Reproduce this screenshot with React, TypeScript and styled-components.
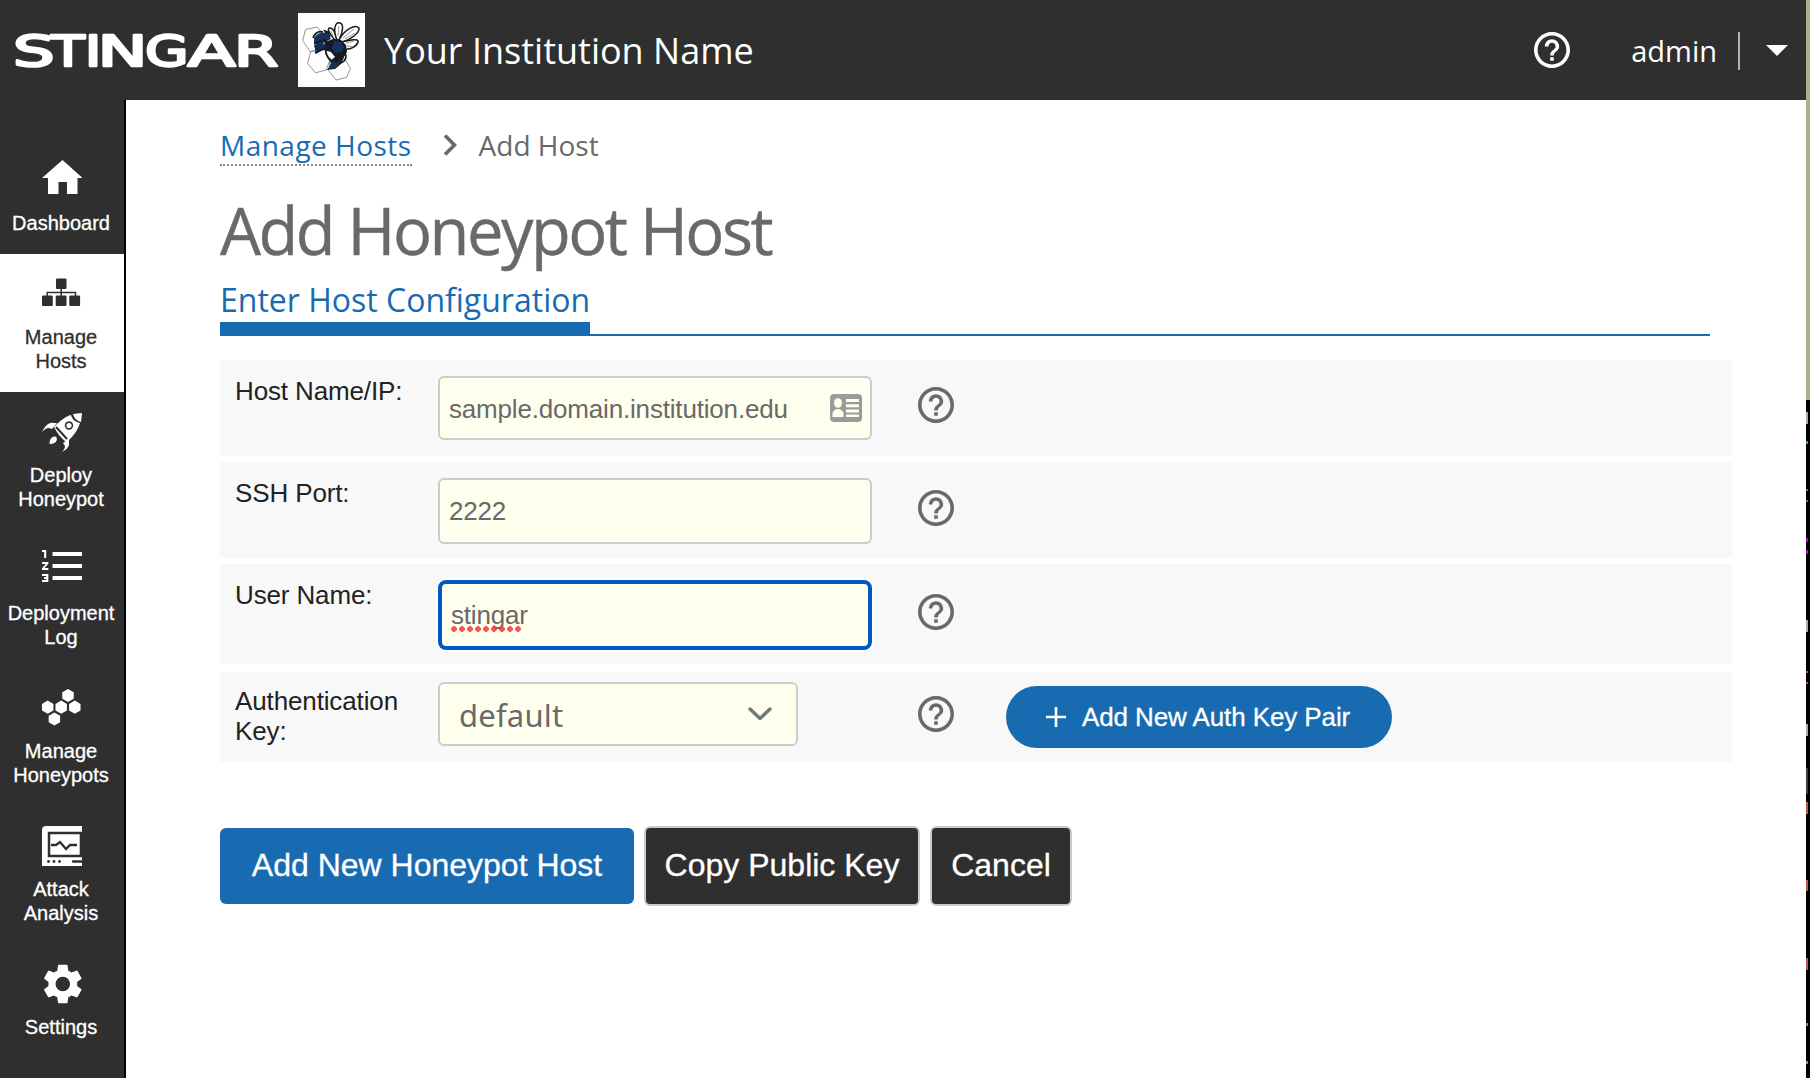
import React from 'react';
import styled, { createGlobalStyle } from 'styled-components';

const SANS = '"Liberation Sans", Arial, sans-serif';
const OPEN = '"Open Sans", "Noto Sans", sans-serif';
const BLUE = '#186bb1';
const DARK = '#2f2f2f';

const Global = createGlobalStyle`
  * { box-sizing: border-box; }
  body { margin: 0; background: #fff; font-family: ${SANS}; overflow: hidden; }
  button, input { font-family: inherit; margin: 0; }
`;

const Screen = styled.div`
  display: flex;
  width: 1810px;
  height: 1078px;
  overflow: hidden;
`;
const Shell = styled.div`
  width: 1806px;
  display: flex;
  flex-direction: column;
  background: #fff;
`;
const EdgeStrip = styled.div`
  width: 4px;
  background:
    linear-gradient(transparent 400px, #000 400px) right / 2px 100% no-repeat,
    linear-gradient(
      #b3ab93 0 400px, #000 400px 412px, #aaa 412px 424px, #000 424px 441px, #12aab4 441px 444px,
      #000 444px 489px, #a55 489px 491px, #000 491px 500px, #a55 500px 502px, #000 502px 538px,
      #b400b4 538px 542px, #000 542px 550px, #b400b4 550px 554px, #000 554px 620px, #aaa 620px 632px,
      #000 632px 671px, #a55 671px 673px, #000 673px 682px, #a55 682px 684px, #000 684px 724px,
      #aaa 724px 736px, #000 736px 768px, #3c3c3c 768px 794px, #000 794px 802px, #b05a5a 802px 814px,
      #000 814px 880px, #b05a5a 880px 891px, #000 891px 958px, #b05a5a 958px 970px, #000 970px 1023px,
      #c66 1023px 1026px, #000 1026px 1061px, #888 1061px 1064px, #000 1064px
    );
`;

const Header = styled.header`
  height: 100px;
  flex: none;
  background: ${DARK};
  color: #fff;
  display: flex;
  align-items: center;
  padding: 0 18px 0 16px;
`;
const Wordmark = styled.svg`
  width: 264px;
  height: 40px;
  margin-right: 18px;
  overflow: visible;
`;
const Emblem = styled.svg`
  width: 67px;
  height: 74px;
  background: #fff;
  margin-right: 19px;
`;
const Institution = styled.span`
  padding-top: 2px;
  font: 400 36px/50px ${OPEN};
  flex: 1;
  white-space: nowrap;
`;
const UserName = styled.span`
  padding-top: 2px;
  font: 400 29px/40px ${OPEN};
  margin-left: 61px;
  margin-right: 21px;
`;
const Divider = styled.span`
  width: 2px;
  height: 38px;
  margin-top: 2px;
  background: #b4b4b4;
  margin-right: 26px;
`;

const Body = styled.div`
  flex: 1;
  display: flex;
  min-height: 0;
`;
const Sidebar = styled.nav`
  width: 126px;
  flex: none;
  background: ${DARK};
  border-right: 2px solid #000;
  padding-top: 40px;
`;
const NavItem = styled.a<{ $active?: boolean }>`
  display: flex;
  flex-direction: column;
  align-items: center;
  padding: 20px 0 19px;
  background: ${(p) => (p.$active ? '#fff' : DARK)};
  color: ${(p) => (p.$active ? DARK : '#fff')};
`;
const NavIcon = styled.svg`
  width: 40px;
  height: 40px;
  display: block;
  margin-bottom: 11px;
  overflow: hidden;
`;
const NavLabel = styled.span`
  width: 122px;
  padding-right: 2px;
  font-size: 20px;
  line-height: 24px;
  -webkit-text-stroke: 0.3px currentColor;
  text-align: center;
  white-space: pre-line;
`;

const Main = styled.main`
  flex: 1;
  padding: 26px 0 0 94px;
`;
const Crumbs = styled.div`
  display: flex;
  height: 40px;
  font: 400 28px/38px ${OPEN};
  color: #696969;
`;
const CrumbLink = styled.a`
  color: ${BLUE};
  height: 40px;
  letter-spacing: 0.48px;
  border-bottom: 2px dotted #888;
`;
const CrumbChevron = styled.svg`
  width: 14px;
  height: 22px;
  margin: 8px 22px 0 31px;
`;
const Title = styled.h1`
  margin: 20px 0 0;
  font: 400 65px/88px ${OPEN};
  letter-spacing: -2.5px;
  color: #696969;
  -webkit-text-stroke: 0.4px currentColor;
`;
const SectionBar = styled.div`
  margin-top: 1px;
  width: 1490px;
  height: 61px;
  display: flex;
  border-bottom: 2px solid ${BLUE};
`;
const SectionTab = styled.h2`
  margin: 0 0 -2px;
  height: 61px;
  padding-top: 3px;
  border-bottom: 14px solid ${BLUE};
  font: 400 32px/44px ${OPEN};
  color: ${BLUE};
  white-space: nowrap;
`;

const Form = styled.div`
  margin-top: 24px;
  width: 1512px;
`;
const Row = styled.div<{ $h: number; $top: number; $gap?: number }>`
  display: flex;
  align-items: flex-start;
  height: ${(p) => p.$h}px;
  padding: ${(p) => p.$top}px 0 0 15px;
  margin-bottom: ${(p) => p.$gap ?? 0}px;
  background: #f8f8f8;
`;
const Label = styled.label<{ $top: number }>`
  width: 203px;
  padding-top: ${(p) => p.$top}px;
  font-size: 26px;
  line-height: 30px;
  letter-spacing: -0.13px;
  color: #222;
`;
const FieldCell = styled.div`
  width: 478px;
`;
const Field = styled.div<{ $h: number; $w?: number; $focus?: boolean }>`
  width: ${(p) => p.$w ?? 434}px;
  height: ${(p) => p.$h}px;
  display: flex;
  align-items: center;
  justify-content: space-between;
  border: ${(p) => (p.$focus ? '4px solid #0058c4' : '2px solid #ccc')};
  border-radius: ${(p) => (p.$focus ? 8 : 6)}px;
  padding: 0 8px 0 9px;
  background: #ffffee;
  color: #696969;
  font-size: 26px;
  line-height: 32px;
  letter-spacing: -0.18px;
  box-shadow: ${(p) => (p.$focus ? '0 0 0 2px #fff' : 'none')};
`;
const HostValue = styled.span`
  padding-top: 2px;
`;
const Misspelled = styled.span`
  position: relative;
  &::after {
    content: '';
    position: absolute;
    left: 0;
    bottom: -1px;
    width: 72px;
    height: 6px;
    background: radial-gradient(circle 3px at 3px 3px, rgba(255, 50, 60, 0.85) 90%, transparent) 0 0 / 8px 6px repeat-x;
  }
`;
const SelectValue = styled.span`
  padding: 1px 0 0 10px;
  font: 400 31px/40px "Noto Sans", sans-serif;
  letter-spacing: 0.2px;
`;
const SelectChevron = styled.svg`
  width: 24px;
  height: 14px;
  margin-right: 16px;
`;
const HelpBox = styled.span<{ $top?: number }>`
  width: 40px;
  display: flex;
  justify-content: center;
  color: #696969;
  padding-top: ${(p) => p.$top ?? 0}px;
`;
const PillButton = styled.button`
  width: 386px;
  height: 62px;
  margin: 4px 0 0 50px;
  display: flex;
  align-items: center;
  padding: 0 0 0 40px;
  gap: 16px;
  border: 0;
  border-radius: 31px;
  background: ${BLUE};
  color: #fff;
  font-size: 26px;
  letter-spacing: -0.1px;
  -webkit-text-stroke: 0.3px currentColor;
  white-space: nowrap;
`;

const Actions = styled.div`
  margin-top: 64px;
  display: flex;
  align-items: center;
  gap: 10px;
`;
const ActionButton = styled.button<{ $primary?: boolean; $w: number }>`
  width: ${(p) => p.$w}px;
  height: ${(p) => (p.$primary ? 76 : 80)}px;
  padding: 0 0 2px;
  border: ${(p) => (p.$primary ? '0' : '2px solid #ccc')};
  border-radius: 6px;
  background: ${(p) => (p.$primary ? BLUE : DARK)};
  color: #fff;
  font-size: 32px;
  -webkit-text-stroke: 0.3px currentColor;
  white-space: nowrap;
`;

const HelpIcon = () => (
  <svg width="36" height="36" viewBox="2 2 20 20" fill="currentColor">
    <path d="M11 18h2v-2h-2v2zm1-16C6.48 2 2 6.48 2 12s4.48 10 10 10 10-4.48 10-10S17.52 2 12 2zm0 18c-4.41 0-8-3.59-8-8s3.59-8 8-8 8 3.590 8 8-3.590 8-8 8zm0-14c-2.210 0-4 1.790-4 4h2c0-1.100.9-2 2-2s2 .9 2 2c0 2-3 1.750-3 5h2c0-2.250 3-2.500 3-5 0-2.210-1.790-4-4-4z" />
  </svg>
);

// letter, ink start, ink width, then the face's left bearing, ink width and advance in em
const wordmark: [string, number, number, number, number, number][] = [
  ['S', 0, 36, 0.066, 0.513, 0.635],
  ['T', 34, 36, 0, 0.614, 0.611],
  ['I', 73, 8, 0.098, 0.099, 0.295],
  ['N', 87, 39, 0.098, 0.552, 0.748],
  ['G', 131, 39, 0.056, 0.652, 0.775],
  ['A', 171, 49, 0.008, 0.668, 0.684],
  ['R', 223, 40, 0.098, 0.588, 0.695],
];
const MARK_SIZE = 43;
const MARK_STROKE = 2.4;

const Logo = () => (
  <Wordmark viewBox="0 0 264 40">
    <text fontFamily="'DejaVu Sans', sans-serif" fontSize={MARK_SIZE} fill="#fff" stroke="#fff" strokeWidth={MARK_STROKE} strokeLinejoin="round">
      {wordmark.map(([ch, x, w, bearing, ink, advance]) => {
        const k = (w - MARK_STROKE) / (ink * MARK_SIZE);
        return (
          <tspan
            key={ch}
            x={x + MARK_STROKE / 2 - bearing * MARK_SIZE * k}
            y="35.700"
            textLength={advance * MARK_SIZE * k}
            lengthAdjust="spacingAndGlyphs"
          >
            {ch}
          </tspan>
        );
      })}
    </text>
  </Wordmark>
);

const hexagon = (cx: number, cy: number, r: number) =>
  [0, 1, 2, 3, 4, 5]
    .map((i) => {
      const a = (Math.PI / 3) * i + Math.PI / 2;
      return `${(cx + r * Math.cos(a)).toFixed(2)},${(cy + r * Math.sin(a)).toFixed(2)}`;
    })
    .join(' ');

const Bee = () => (
  <Emblem viewBox="0 0 67 74">
    <g fill="none" stroke="#8a8a8a" strokeWidth="0.9">
      <path d="M7.500 16.500L19.300 14 27 24 23 36 12 38.600 4.700 27.500z" />
      <path d="M12.700 38.600L27 36.500 32 47 28 57 17.500 59.800 9.500 50.500z" />
      <path d="M32 47L46.500 45.500 52.500 55.500 48.500 64.500 38 67 30.500 57.500z" />
    </g>
    <g fill="#fff" stroke="#181a1e" strokeWidth="1.500">
      <path d="M37 27C30 19 29 15 32 15s6 5 7 12z" />
      <path d="M39 27C34 15 38 9 42 10s3 9-1 17z" />
      <path d="M41 27C47 16 57 11 61 15c1 4-8 12-17 14z" />
      <path d="M44 29c8-2 17-4 16 0s-7 8-14 7z" />
    </g>
    <path d="M40 23l1-10M45 25l11-9M48 30l8-2M35 23l-2-5M49 33l6 1M47 26l10-6" stroke="#555" strokeWidth="0.600" />
    <path d="M27 29l8-3 8 1 5 5 1 7-3 5-3 7-6 5-9 1 6-4-2-5 5-4-4-5-8-2z" fill="#171a20" />
    <path d="M36 28l7 1 3 5-2 5-7 1-3-5z" fill="#16325f" />
    <path d="M16 25c3-5 9-7 14-4l3 5-6 3-4 4-7-2z" fill="#16325f" />
    <path d="M16 32l11-1 3 3-12 7z" fill="#102d58" />
    <path d="M15 25c2-5 6-7 10-6M29 21l-2-3 3 1 2 5M16 31l9-4 4 2M17 40l12-6" fill="none" stroke="#171a20" strokeWidth="1.700" />
    <path d="M32 47l-3-2 4 5-3 6 7-1 7-8-6 3z" fill="#16325f" />
    <path d="M43 50c6-3 6-8 3-11M29 34c-3 5 0 11 4 13" fill="none" stroke="#171a20" strokeWidth="1.600" />
  </Emblem>
);

const navItems: { label: string; active?: boolean; icon: React.ReactNode }[] = [
  { label: 'Dashboard', icon: <path d="M16.500 34V22h8.500v12h10.500V18h5L20.500 0 0 18h6v16z" /> },
  {
    label: 'Manage\nHosts',
    active: true,
    icon: (
      <>
        <rect x="14" y="4.500" width="10.500" height="10.500" rx="1" />
        <rect x="0" y="21.500" width="10.800" height="10.500" rx="1" />
        <rect x="13.700" y="21.500" width="10.800" height="10.500" rx="1" />
        <rect x="27.300" y="21.500" width="10.800" height="10.500" rx="1" />
        <path d="M5.200 22V18.500H33.500V22M19.200 14V22" fill="none" stroke="currentColor" strokeWidth="1.500" />
      </>
    ),
  },
  {
    label: 'Deploy\nHoneypot',
    icon: (
      <>
        <path d="M40 1L31 2c1 4 4 7 8 8z" />
        <path d="M29 3C24 4 18 9 14 13l-2 2c3 6 7 11 12 15l3-2c4-4 9-10 11-17-5-1-8-4-9-8z" />
        <path d="M0 20C3 14 7 10 11 11h4l-5 6-3-1c-3 0-5 2-7 4zM20 40c4-2 7-5 7-8v-5l-6 4 2 3c0 2-1 4-3 6z" />
        <path d="M7.500 32c0-6 3-7.500 6-7.500 3 2 1 8-6 7.500z" />
        <circle cx="27" cy="13.500" r="4.200" fill={DARK} />
        <circle cx="27" cy="13.500" r="2.600" />
        <path d="M14 15l11 12" stroke={DARK} strokeWidth="2" />
      </>
    ),
  },
  {
    label: 'Deployment\nLog',
    icon: (
      <path
        transform="translate(-4.200 -8) scale(2.105 2)"
        d="M2 17h2v.5H3v1h1v.5H2v1h3v-4H2v1zm1-9h1V4H2v1h1v3zm-1 3h1.800L2 13.100v.9h3v-1H3.200L5 10.900V10H2v1zm5-6v2h14V5H7zm0 14h14v-2H7v2zm0-6h14v-2H7v2z"
      />
    ),
  },
  {
    label: 'Manage\nHoneypots',
    icon: (
      <>
        {[[5.700, 19.200], [19.200, 19.200], [32.800, 19.200], [26, 7.500], [12.400, 31]].map(([x, y]) => (
          <polygon key={`${x}-${y}`} points={hexagon(x, y, 6.600)} />
        ))}
      </>
    ),
  },
  {
    label: 'Attack\nAnalysis',
    icon: (
      <>
        <path d="M4 0H40V40H0V4Q0 0 4 0z" />
        <path d="M42 7H7V30H42" fill="none" stroke={DARK} strokeWidth="2.500" />
        <path d="M39 7V30" stroke={DARK} strokeWidth="2.600" />
        <path d="M9 19h5l4-3 6 7 4-4h7" fill="none" stroke={DARK} strokeWidth="2.300" />
        <path d="M31 35.500H42" stroke={DARK} strokeWidth="2.300" strokeLinecap="round" />
        <g fill={DARK}>
          <circle cx="6.500" cy="35.500" r="1.400" />
          <circle cx="12" cy="35.500" r="1.400" />
          <circle cx="17.500" cy="35.500" r="1.400" />
        </g>
      </>
    ),
  },
  {
    label: 'Settings',
    icon: (
      <path
        transform="translate(-3.200 -4) scale(2)"
        d="M19.140 12.940c.04-.3.060-.61.060-.94 0-.32-.02-.64-.07-.94l2.030-1.580c.18-.14.23-.41.12-.61l-1.920-3.320c-.12-.22-.37-.29-.59-.22l-2.390.96c-.5-.38-1.030-.7-1.620-.94l-.36-2.540c-.04-.24-.24-.41-.48-.41h-3.840c-.24 0-.43.17-.47.41l-.36 2.540c-.59.24-1.130.57-1.620.94l-2.390-.96c-.22-.08-.47 0-.59.22L2.740 8.870c-.12.21-.08.47.12.61l2.030 1.580c-.05.3-.09.63-.09.94s.02.64.07.94l-2.030 1.580c-.18.14-.23.41-.12.61l1.920 3.320c.12.22.37.29.59.22l2.390-.96c.5.38 1.030.7 1.620.94l.36 2.540c.05.24.24.41.48.41h3.840c.24 0 .44-.17.47-.41l.36-2.540c.59-.24 1.130-.56 1.620-.94l2.390.96c.22.08.47 0 .59-.22l1.920-3.320c.12-.22.07-.47-.12-.61l-2.010-1.580zM12 15.600c-1.980 0-3.600-1.620-3.600-3.600s1.620-3.600 3.600-3.600 3.600 1.620 3.600 3.600-1.620 3.600-3.600 3.600z"
      />
    ),
  },
];

export default function App() {
  return (
    <>
      <Global />
      <Screen>
        <Shell>
          <Header>
            <Logo />
            <Bee />
            <Institution>Your Institution Name</Institution>
            <HelpIcon />
            <UserName>admin</UserName>
            <Divider />
            <svg width="22" height="11" viewBox="0 0 22 11" fill="#fff">
              <path d="M0 0H22L11 11z" />
            </svg>
          </Header>
          <Body>
            <Sidebar>
              {navItems.map((n) => (
                <NavItem key={n.label} $active={n.active}>
                  <NavIcon viewBox="0 0 40 40" fill="currentColor">{n.icon}</NavIcon>
                  <NavLabel>{n.label}</NavLabel>
                </NavItem>
              ))}
            </Sidebar>
            <Main>
              <Crumbs>
                <CrumbLink>Manage Hosts</CrumbLink>
                <CrumbChevron viewBox="0 0 14 22" fill="none" stroke="#696969" strokeWidth="3.600">
                  <path d="M2 1.500L11.500 11 2 20.500" />
                </CrumbChevron>
                <span>Add Host</span>
              </Crumbs>
              <Title>Add Honeypot Host</Title>
              <SectionBar>
                <SectionTab>Enter Host Configuration</SectionTab>
              </SectionBar>
              <Form>
                <Row $h={96} $top={16} $gap={6}>
                  <Label $top={0}>Host Name/IP:</Label>
                  <FieldCell>
                    <Field $h={64}>
                      <HostValue>sample.domain.institution.edu</HostValue>
                      <svg width="32" height="28" viewBox="0 0 32 28">
                        <rect width="32" height="28" rx="4" fill="#9b9b9b" />
                        <g fill="#ffffee">
                          <ellipse cx="8" cy="9" rx="4" ry="4.800" />
                          <path d="M2.500 23v-3c0-3 3-5 5.500-5s5.500 2 5.500 5v3z" />
                          <path d="M16 5h13v3H16zM16 10.300h13v3H16zM16 15.600h13v3H16zM16 20.500h13v2.500H16z" />
                        </g>
                      </svg>
                    </Field>
                  </FieldCell>
                  <HelpBox $top={11}><HelpIcon /></HelpBox>
                </Row>
                <Row $h={96} $top={16} $gap={6}>
                  <Label $top={0}>SSH Port:</Label>
                  <FieldCell><Field $h={66}>2222</Field></FieldCell>
                  <HelpBox $top={12}><HelpIcon /></HelpBox>
                </Row>
                <Row $h={100} $top={16} $gap={8}>
                  <Label $top={0}>User Name:</Label>
                  <FieldCell>
                    <Field $h={70} $focus><Misspelled>stingar</Misspelled></Field>
                  </FieldCell>
                  <HelpBox $top={14}><HelpIcon /></HelpBox>
                </Row>
                <Row $h={90} $top={10}>
                  <Label $top={4}>Authentication Key:</Label>
                  <FieldCell>
                    <Field $h={64} $w={360}>
                      <SelectValue>default</SelectValue>
                      <SelectChevron viewBox="0 0 24 14" fill="none" stroke="#6f7a80" strokeWidth="3.400" strokeLinecap="round" strokeLinejoin="round">
                        <path d="M2 2L12 11.500 22 2" />
                      </SelectChevron>
                    </Field>
                  </FieldCell>
                  <HelpBox $top={14}><HelpIcon /></HelpBox>
                  <PillButton>
                    <svg width="20" height="20" viewBox="0 0 20 20" stroke="#fff" strokeWidth="2.600">
                      <path d="M10 0V20M0 10H20" />
                    </svg>
                    Add New Auth Key Pair
                  </PillButton>
                </Row>
              </Form>
              <Actions>
                <ActionButton $primary $w={414}>Add New Honeypot Host</ActionButton>
                <ActionButton $w={276}>Copy Public Key</ActionButton>
                <ActionButton $w={142}>Cancel</ActionButton>
              </Actions>
            </Main>
          </Body>
        </Shell>
        <EdgeStrip />
      </Screen>
    </>
  );
}
